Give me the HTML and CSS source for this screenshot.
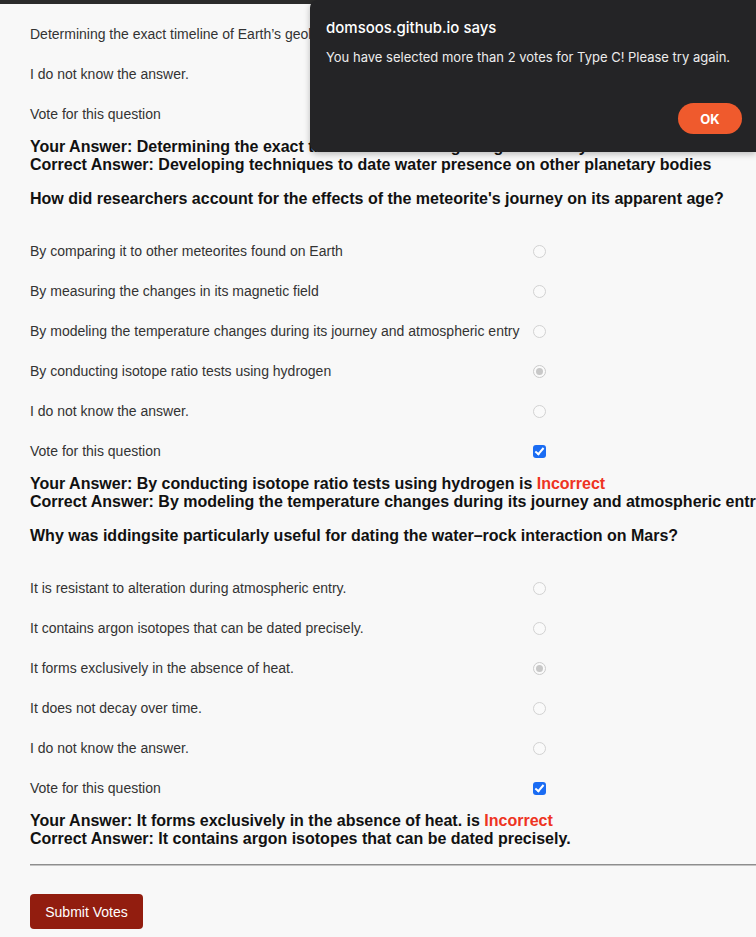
FILE: index.html
```html
<!DOCTYPE html>
<html lang="en">
<head>
<meta charset="utf-8">
<title>Quiz</title>
<link rel="stylesheet" href="styles.css">
</head>
<body>
<div class="topbar"></div>
<main class="quiz">
  <section class="question">
    <div class="options">
      <label class="opt"><span class="opt-text">Determining the exact timeline of Earth’s geological history</span><input class="radio" type="radio" name="q1" checked></label>
      <label class="opt"><span class="opt-text">I do not know the answer.</span><input class="radio" type="radio" name="q1"></label>
      <label class="opt"><span class="opt-text">Vote for this question</span><input class="check" type="checkbox" checked></label>
    </div>
    <div class="result">
      <div>Your Answer: Determining the exact timeline of Earth’s geological history is <span class="bad">Incorrect</span></div>
      <div>Correct Answer: Developing techniques to date water presence on other planetary bodies</div>
    </div>
  </section>

  <section class="question">
    <h3 class="q-title">How did researchers account for the effects of the meteorite's journey on its apparent age?</h3>
    <div class="options">
      <label class="opt"><span class="opt-text">By comparing it to other meteorites found on Earth</span><input class="radio" type="radio" name="q2"></label>
      <label class="opt"><span class="opt-text">By measuring the changes in its magnetic field</span><input class="radio" type="radio" name="q2"></label>
      <label class="opt"><span class="opt-text">By modeling the temperature changes during its journey and atmospheric entry</span><input class="radio" type="radio" name="q2"></label>
      <label class="opt"><span class="opt-text">By conducting isotope ratio tests using hydrogen</span><input class="radio" type="radio" name="q2" checked></label>
      <label class="opt"><span class="opt-text">I do not know the answer.</span><input class="radio" type="radio" name="q2"></label>
      <label class="opt"><span class="opt-text">Vote for this question</span><input class="check" type="checkbox" checked></label>
    </div>
    <div class="result">
      <div>Your Answer: By conducting isotope ratio tests using hydrogen is <span class="bad">Incorrect</span></div>
      <div>Correct Answer: By modeling the temperature changes during its journey and atmospheric entry</div>
    </div>
  </section>

  <section class="question">
    <h3 class="q-title">Why was iddingsite particularly useful for dating the water–rock interaction on Mars?</h3>
    <div class="options">
      <label class="opt"><span class="opt-text">It is resistant to alteration during atmospheric entry.</span><input class="radio" type="radio" name="q3"></label>
      <label class="opt"><span class="opt-text">It contains argon isotopes that can be dated precisely.</span><input class="radio" type="radio" name="q3"></label>
      <label class="opt"><span class="opt-text">It forms exclusively in the absence of heat.</span><input class="radio" type="radio" name="q3" checked></label>
      <label class="opt"><span class="opt-text">It does not decay over time.</span><input class="radio" type="radio" name="q3"></label>
      <label class="opt"><span class="opt-text">I do not know the answer.</span><input class="radio" type="radio" name="q3"></label>
      <label class="opt"><span class="opt-text">Vote for this question</span><input class="check" type="checkbox" checked></label>
    </div>
    <div class="result">
      <div>Your Answer: It forms exclusively in the absence of heat. is <span class="bad">Incorrect</span></div>
      <div>Correct Answer: It contains argon isotopes that can be dated precisely.</div>
    </div>
  </section>

  <hr class="divider">
  <button class="submit" type="button">Submit Votes</button>
</main>

<div class="dialog" role="alertdialog">
  <div class="dialog-title">domsoos.github.io says</div>
  <div class="dialog-msg">You have selected more than 2 votes for Type C! Please try again.</div>
  <div class="dialog-actions"><button class="dialog-ok" type="button">OK</button></div>
</div>
</body>
</html>
```

FILE: styles.css
```css
html, body {
  margin: 0;
  padding: 0;
  overflow: hidden;
  background: #f8f8f8;
}
body {
  font-family: "Liberation Sans", Arial, Helvetica, sans-serif;
  color: #111;
  height: 937px;
  position: relative;
}
.topbar {
  height: 4px;
  background: #2b2b2b;
}
.quiz {
  padding: 10px 0 0 30px;
}
.options {
  display: flex;
  flex-direction: column;
}
.opt {
  display: flex;
  align-items: center;
  height: 40px;
  font-size: 14px;
  line-height: 16px;
  color: #333;
}
.opt-text {
  width: 503px;
  white-space: nowrap;
}
.radio {
  appearance: none;
  -webkit-appearance: none;
  margin: 0;
  width: 13px;
  height: 13px;
  border: 1px solid #d2d2d2;
  border-radius: 50%;
  background: #fafafa;
  box-sizing: border-box;
  position: relative;
}
.radio:checked {
  border-color: #cbcbcb;
}
.radio:checked::after {
  content: "";
  position: absolute;
  left: 2px;
  top: 2px;
  width: 7px;
  height: 7px;
  border-radius: 50%;
  background: #c8c8c8;
}
.check {
  appearance: none;
  -webkit-appearance: none;
  margin: 0;
  width: 13px;
  height: 13px;
  border-radius: 3px;
  background: #1a6cf3;
  position: relative;
  box-sizing: border-box;
}
.check:checked::after {
  content: "";
  position: absolute;
  left: 4px;
  top: 1px;
  width: 3px;
  height: 7px;
  border: solid #fff;
  border-width: 0 2px 2px 0;
  transform: rotate(40deg);
}
.result {
  margin-top: 4px;
  font-size: 16px;
  font-weight: bold;
  line-height: 17.5px;
  white-space: nowrap;
  color: #111;
}
.bad {
  color: #ee3322;
}
.q-title {
  margin: 17px 0 23px;
  font-size: 16px;
  line-height: 18px;
  font-weight: bold;
  white-space: nowrap;
  color: #111;
}
.divider {
  margin: 17px 0 28px;
  height: 0;
  border: 0;
  border-top: 1px solid #8e8e8e;
  border-bottom: 1px solid #c4c4c4;
}
.submit {
  display: block;
  width: 113px;
  height: 35px;
  padding: 0;
  border: 0;
  border-radius: 4px;
  background: #921d0f;
  color: #fff;
  font-family: "Liberation Sans", Arial, sans-serif;
  font-size: 14px;
}
.dialog {
  position: absolute;
  top: 0;
  left: 310px;
  width: 446px;
  box-sizing: border-box;
  padding: 19px 14px 18px 16px;
  background: #242426;
  border-radius: 8px 0 0 8px;
  box-shadow: 0 2px 6px rgba(0, 0, 0, 0.25);
  font-family: Inter, "Noto Sans", sans-serif;
  color: #fff;
}
.dialog-title {
  font-size: 15px;
  line-height: 18px;
  font-weight: 500;
}
.dialog-msg {
  margin-top: 12px;
  font-size: 13px;
  line-height: 16px;
  color: #ececec;
  white-space: nowrap;
}
.dialog-actions {
  display: flex;
  justify-content: flex-end;
  margin-top: 38px;
}
.dialog-ok {
  width: 64px;
  height: 31px;
  border: 0;
  border-radius: 16px;
  background: #ef5a2d;
  color: #fff;
  font-family: Inter, "Noto Sans", sans-serif;
  font-size: 13px;
  font-weight: 700;
  padding: 0;
}
```
